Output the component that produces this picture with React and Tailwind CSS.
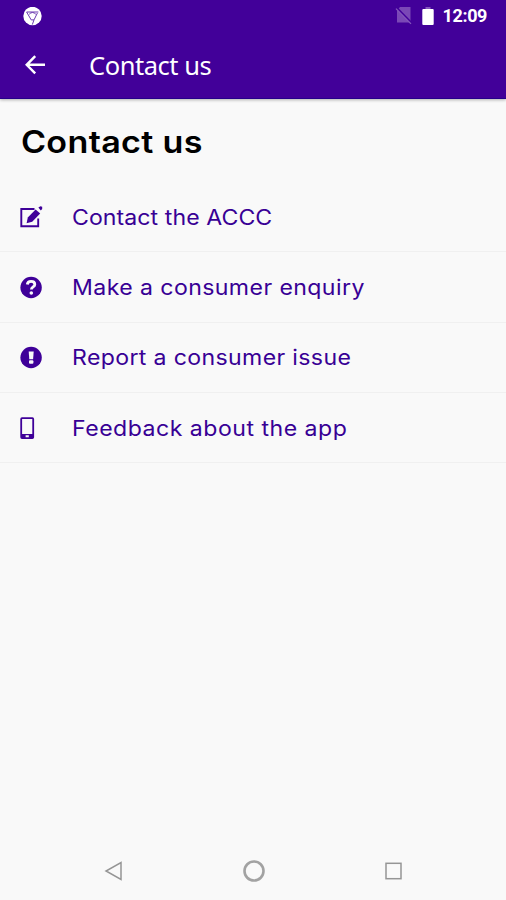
import React from 'react';

const EditIcon = () => (
    <svg width="23" height="23" viewBox="0 0 23 23">
        <path d="M14.5 3H1.3V20.3H18.2V12.5" fill="none" stroke="#3f0099" strokeWidth="1.9" />
        <path d="M6.6 17.2L7.8 11.6L15.6 3.5L20.2 7.6L12.2 15.8Z" fill="#3f0099" />
        <path d="M18.4 1.4L20.4 .2L22.2 .8V3L20.8 4.6Z" fill="#3f0099" />
    </svg>
);

const QuestionIcon = () => (
    <svg width="23" height="23" viewBox="0 0 23 23">
        <circle cx="11.1" cy="11.5" r="10.7" fill="#3f0099" />
        <path d="M7.3 8.5C7.5 6.4 9 5.4 11.1 5.4C13.4 5.4 14.8 6.6 14.8 8.4C14.8 11 11.4 10.8 11.4 13.6" fill="none" stroke="#f9f9f9" strokeWidth="2.8" />
        <circle cx="11.3" cy="17" r="1.8" fill="#f9f9f9" />
    </svg>
);

const AlertIcon = () => (
    <svg width="23" height="23" viewBox="0 0 23 23">
        <circle cx="11.1" cy="11.5" r="10.7" fill="#3f0099" />
        <path d="M8.7 5.4H13.7L13.1 13.2H9.3Z" fill="#f9f9f9" />
        <rect x="9" y="14.2" width="4.4" height="3.6" rx="1" fill="#f9f9f9" />
    </svg>
);

const PhoneIcon = () => (
    <svg width="23" height="23" viewBox="0 0 23 23">
        <path fillRule="evenodd" d="M2 .2H12.4Q14.1 .2 14.1 1.9V20.3Q14.1 22 12.4 22H2Q.3 22 .3 20.3V1.9Q.3 .2 2 .2ZM2.1 2V16.9H12.3V2ZM5.6 18.3V20.3H8.8V18.3Z" fill="#3f0099" />
    </svg>
);

const items = [
    { label: 'Contact the ACCC', Icon: EditIcon, tracking: 'tracking-[0.06px]' },
    { label: 'Make a consumer enquiry', Icon: QuestionIcon, tracking: 'tracking-[0.37px]' },
    { label: 'Report a consumer issue', Icon: AlertIcon, tracking: 'tracking-[0.32px]' },
    { label: 'Feedback about the app', Icon: PhoneIcon, tracking: 'tracking-[0.44px]' },
];

function StatusBar() {
    return (
        <div className="flex h-8 items-center justify-between pl-[23px] pr-[19px]">
            <svg width="19" height="19" viewBox="0 0 19 19">
                <circle cx="9.5" cy="9" r="9.2" fill="#fff" />
                <g fill="none" stroke="#6b3bb0" strokeWidth="1">
                    <path d="M3.6 5H15.4M3.6 5L8.2 12.9H11L14.4 6M11 12.9L9.3 17.6" />
                    <path d="M6.2 7.2Q9.5 3.8 12.8 7.2" />
                </g>
            </svg>
            <div className="flex items-center">
                <svg width="17" height="18" viewBox="0 0 17 18">
                    <path d="M5 0H15.5V15.5H2V3.5Z" fill="#7a48b6" />
                    <path d="M1.6 .8L17 16.4" stroke="#42009a" strokeWidth="2" />
                    <path d="M1 1.6L16 16.9" stroke="#8657bd" strokeWidth="1.3" />
                </svg>
                <svg width="12" height="19" viewBox="0 0 12 19" className="ml-[10px]">
                    <rect x="3.5" width="5" height="2.5" fill="#8657bd" />
                    <rect x=".3" y="2" width="11.4" height="15.9" rx="1" fill="#fff" />
                </svg>
                <span className="ml-[9px] font-['Roboto',sans-serif] text-[18px] leading-8 font-bold tracking-[-0.4px] text-white">12:09</span>
            </div>
        </div>
    );
}

function NavBar() {
    return (
        <div className="flex h-[58px] items-center justify-between pr-[103px] pl-[104px]">
            <svg width="20" height="20" viewBox="0 0 20 20" fill="none" stroke="#959595" strokeWidth="1.5">
                <path d="M17 1.5V18.5L2 10Z" />
            </svg>
            <svg width="24" height="24" viewBox="0 0 24 24" fill="none" stroke="#a2a2a2">
                <circle cx="12" cy="12" r="9.5" strokeWidth="2.6" />
            </svg>
            <svg width="20" height="20" viewBox="0 0 20 20" fill="none" stroke="#959595" strokeWidth="1.5">
                <rect x="3" y="2.3" width="15" height="15.4" />
            </svg>
        </div>
    );
}

export default function App() {
    return (
        <div className="flex h-[900px] w-[506px] flex-col overflow-hidden bg-[#f9f9f9]">
            <header className="h-[99px] shrink-0 border-b border-[#25008a] bg-[#420099] shadow-[0_1px_3px_rgba(0,0,0,0.3)]">
                <StatusBar />
                <div className="flex h-[66px] items-center pl-[25px]">
                    <svg width="20" height="20" viewBox="0 0 20 20" fill="none" stroke="#fff" strokeWidth="2.4">
                        <path d="M20 9.8H2M10.2 1.2L1.7 9.8L10.2 18.4" />
                    </svg>
                    <span className="ml-[44px] font-['Noto_Sans',sans-serif] text-[25.5px] tracking-[-0.45px] text-white">Contact us</span>
                </div>
            </header>

            <main className="flex-1 font-['Inter',sans-serif]">
                <h1 className="h-[83px] w-fit origin-left scale-x-[1.1] pt-[22px] pl-[19px] text-[31px] leading-[42px] font-semibold tracking-[0.3px] text-black">Contact us</h1>
                <ul>
                    {items.map(({ label, Icon, tracking }) => (
                        <li key={label} className="flex h-[70.3px] items-center border-b border-[#f0f0f0] pl-5">
                            <div className="w-[52px] pt-px"><Icon /></div>
                            <span className={`origin-left scale-x-110 pt-0.5 text-[21px] text-[#380095] ${tracking}`}>{label}</span>
                        </li>
                    ))}
                </ul>
            </main>

            <NavBar />
        </div>
    );
}
